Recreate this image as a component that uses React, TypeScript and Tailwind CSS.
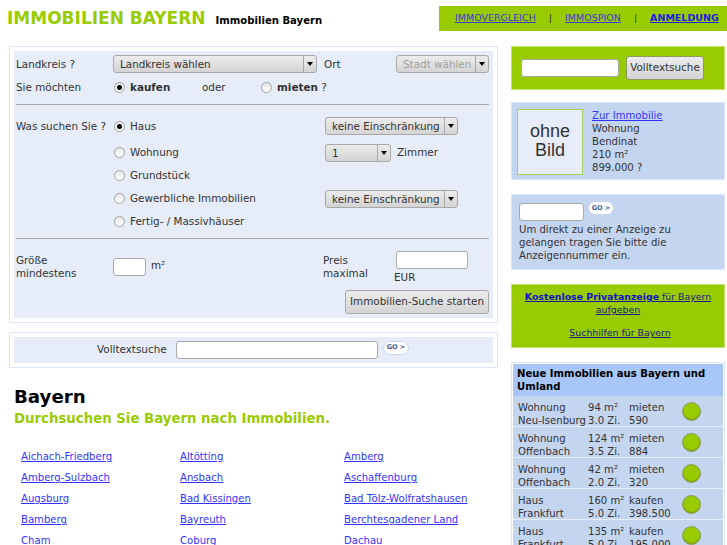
import type { ReactNode } from 'react';

const cities = [
  ['Aichach-Friedberg', 'Altötting', 'Amberg'],
  ['Amberg-Sulzbach', 'Ansbach', 'Aschaffenburg'],
  ['Augsburg', 'Bad Kissingen', 'Bad Tölz-Wolfratshausen'],
  ['Bamberg', 'Bayreuth', 'Berchtesgadener Land'],
  ['Cham', 'Coburg', 'Dachau'],
];

const listings = [
  ['Wohnung', 'Neu-Isenburg', '94 m²', '3.0 Zi.', 'mieten', '590'],
  ['Wohnung', 'Offenbach', '124 m²', '3.5 Zi.', 'mieten', '884'],
  ['Wohnung', 'Offenbach', '42 m²', '2.0 Zi.', 'mieten', '320'],
  ['Haus', 'Frankfurt', '160 m²', '5.0 Zi.', 'kaufen', '398.500'],
  ['Haus', 'Frankfurt', '135 m²', '5.0 Zi.', 'kaufen', '195.000'],
];

function Radio({ checked }: { checked?: boolean }) {
  return (
    <span className="flex h-[11px] w-[11px] shrink-0 items-center justify-center rounded-full border border-[#a0a0a0] bg-gradient-to-b from-[#e8e8e8] to-white">
      {checked && <span className="h-[5px] w-[5px] rounded-full bg-black" />}
    </span>
  );
}

function Select({ label, width, disabled }: { label: string; width: string; disabled?: boolean }) {
  return (
    <div className={`flex h-[18px] items-stretch rounded-[3px] border border-[#a8a8a8] bg-gradient-to-b from-[#ececec] to-[#d4d4d4] ${width}`}>
      <span className={`flex-1 pl-1.5 leading-[17px] whitespace-nowrap ${disabled ? 'text-[#a0a0a0]' : 'text-[#333]'}`}>{label}</span>
      <span className="flex w-[13px] items-center justify-center border-l border-[#a8a8a8]">
        <span className="h-0 w-0 border-x-[3px] border-t-[4px] border-x-transparent border-t-black" />
      </span>
    </div>
  );
}

function TextBox({ width, height = 'h-[18px]' }: { width: string; height?: string }) {
  return <div className={`rounded-[3px] border border-[#a8a8a8] bg-white ${width} ${height}`} />;
}

function GoButton() {
  return (
    <span className="flex h-[14px] w-[26px] items-center justify-center rounded-full border border-[#c8d4ec] bg-white text-[6.5px] font-bold whitespace-nowrap text-[#3a5a90]">
      GO &gt;
    </span>
  );
}

function Panel({ className, children }: { className: string; children: ReactNode }) {
  return <div className={`border border-[#dbe6fb] p-1 ${className}`}>{children}</div>;
}

function SearchOption({ checked, label, children }: { checked?: boolean; label: string; children?: ReactNode }) {
  return (
    <div className="flex h-[23px] items-center">
      <div className="ml-[98px] flex w-[211px] items-center gap-[5px]">
        <Radio checked={checked} />
        <span>{label}</span>
      </div>
      {children}
    </div>
  );
}

export default function App() {
  return (
    <div className="h-[545px] w-[727px] overflow-hidden bg-white font-['DejaVu_Sans',sans-serif] text-[10.1px] text-[#333]">
      <header className="flex h-[46px] items-start justify-between">
        <div className="ml-[7px] mt-[8px] flex items-baseline gap-[10px]">
          <span className="text-[17px] font-bold leading-[20px] text-[#99cc00]">IMMOBILIEN BAYERN</span>
          <span className="font-bold text-black">Immobilien Bayern</span>
        </div>
        <nav className="mt-[6px] flex h-[25px] w-[288px] items-center bg-[#99cc00] pl-[16px] text-[9.5px] text-[#3a3ad0]">
          <a className="underline" href="#">IMMOVERGLEICH</a>
          <span className="mx-[13px] text-[#333]">|</span>
          <a className="underline" href="#">IMMOSPION</a>
          <span className="mx-[13px] text-[#333]">|</span>
          <a className="font-bold text-[#2020e0] underline" href="#">ANMELDUNG</a>
        </nav>
      </header>

      <div className="flex items-start pl-[9px]">
        <main className="w-[489px]">
          <Panel className="h-[277px]">
            <div className="h-[267px] bg-[#e6edf9] pl-[2px] pr-[4px] text-[10.4px]">
              <div className="flex h-[22px] items-end">
                <span className="w-[97px]">Landkreis ?</span>
                <Select label="Landkreis wählen" width="w-[204px]" />
                <span className="ml-[7px] w-[72px]">Ort</span>
                <Select label="Stadt wählen" width="w-[93px]" disabled />
              </div>
              <div className="flex h-[27px] items-center pt-[2px]">
                <span className="w-[98px]">Sie möchten</span>
                <Radio checked />
                <span className="ml-[5px] w-[72px] font-bold">kaufen</span>
                <span className="w-[59px]">oder</span>
                <Radio />
                <span className="ml-[5px]"><b>mieten</b> ?</span>
              </div>
              <hr className="mt-[4px] border-t border-[#a8a8a8]" />
              <div className="mt-[12px] flex h-[18px] items-center">
                <span className="w-[98px] pt-[2px]">Was suchen Sie ?</span>
                <div className="flex w-[211px] items-center gap-[5px] pt-[2px]">
                  <Radio checked />
                  <span>Haus</span>
                </div>
                <Select label="keine Einschränkung" width="w-[133px]" />
              </div>
              <div className="mt-[6px]">
                <SearchOption label="Wohnung">
                  <Select label="1" width="w-[66px]" />
                  <span className="ml-[6px]">Zimmer</span>
                </SearchOption>
                <SearchOption label="Grundstück" />
                <SearchOption label="Gewerbliche Immobilien">
                  <Select label="keine Einschränkung" width="w-[133px]" />
                </SearchOption>
                <SearchOption label="Fertig- / Massivhäuser" />
              </div>
              <hr className="mt-[5px] border-t border-[#a8a8a8]" />
              <div className="mt-[12px] flex items-start">
                <span className="mt-[3px] w-[97px] leading-[13px]">Größe<br />mindestens</span>
                <div className="mt-[7px] flex w-[210px] items-start">
                  <TextBox width="w-[33px]" />
                  <span className="ml-[5px]">m²</span>
                </div>
                <span className="mt-[3px] w-[73px] leading-[13px]">Preis<br />maximal</span>
                <div>
                  <TextBox width="w-[72px]" />
                  <div className="mt-[1px] -ml-[2px]">EUR</div>
                </div>
              </div>
              <div className="mt-[4px] flex justify-end">
                <button className="h-[24px] w-[144px] rounded-[3px] border border-[#a8a8a8] bg-gradient-to-b from-[#ececec] to-[#d4d4d4] text-[#333]">
                  Immobilien-Suche starten
                </button>
              </div>
            </div>
          </Panel>

          <Panel className="mt-[9px] h-[36px]">
            <div className="flex h-[26px] items-center bg-[#e6edf9] text-[10.4px]">
              <span className="ml-[83px] w-[79px]">Volltextsuche</span>
              <TextBox width="w-[202px]" />
              <span className="-mt-[4px] ml-[5px]"><GoButton /></span>
            </div>
          </Panel>

          <h1 className="ml-[5px] mt-[17px] text-[18.2px] font-bold leading-[24px] text-black">Bayern</h1>
          <h2 className="ml-[5px] text-[13.3px] font-bold leading-[19px] text-[#99cc00]">Durchsuchen Sie Bayern nach Immobilien.</h2>

          <div className="ml-[12px] mt-[22px] grid grid-cols-[159px_164px_1fr] gap-y-[8px] leading-[13px]">
            {cities.flat().map((city) => (
              <a key={city} className="text-[#3333ff] underline" href="#">{city}</a>
            ))}
          </div>
        </main>

        <aside className="ml-[13px] w-[214px]">
          <div className="flex h-[44px] items-center border border-[#c4e070] bg-[#99cc00] pl-[9px]">
            <TextBox width="w-[98px]" />
            <button className="ml-[7px] h-[24px] w-[78px] rounded-[3px] border border-[#8a9a60] bg-gradient-to-b from-[#ececec] to-[#d4d4d4] text-[10.4px] text-[#333]">
              Volltextsuche
            </button>
          </div>

          <div className="mt-[12px] flex h-[78px] border border-[#dbe6fb] bg-[#c4d5f0] pl-[5px] pt-[6px]">
            <div className="flex h-[66px] w-[66px] shrink-0 items-center justify-center border border-[#a8d060] bg-[#e6edf9] pb-[2px] text-center font-['Liberation_Sans',sans-serif] text-[18px] leading-[19px]">
              ohne<br />Bild
            </div>
            <div className="ml-[9px] leading-[13px]">
              <a className="text-[#3333ff] underline" href="#">Zur Immobilie</a>
              <br />Wohnung<br />Bendinat<br />210 m²<br />899.000 ?
            </div>
          </div>

          <div className="mt-[14px] h-[76px] border border-[#dbe6fb] bg-[#c4d5f0] pl-[7px] pt-[8px] leading-[13px]">
            <div className="flex items-start">
              <TextBox width="w-[65px]" />
              <span className="-mt-[2px] ml-[4px]"><GoButton /></span>
            </div>
            <p className="mt-[2px]">Um direkt zu einer Anzeige zu<br />gelangen tragen Sie bitte die<br />Anzeigennummer ein.</p>
          </div>

          <div className="mt-[14px] h-[64px] border border-[#c4e070] bg-[#99cc00] pt-[5px] text-center text-[9.4px] leading-[13px]">
            <a className="text-[#1a1a80] underline" href="#">
              <b className="text-[#1010d0]">Kostenlose Privatanzeige</b> für Bayern<br />aufgeben
            </a>
            <span className="block h-[10px]" />
            <a className="ml-[4px] text-[#1a1a80] underline" href="#">Suchhilfen für Bayern</a>
          </div>

          <div className="mt-[14px] border border-[#dbe6fb] p-px">
            <div className="bg-[#a8c6f8] px-[4px] py-[3px] font-bold leading-[13px] text-black">
              Neue Immobilien aus Bayern und Umland
            </div>
            {listings.map((l, i) => (
              <div key={i} className="flex h-[31px] items-start border-b border-[#e6edf9] bg-[#c4d5f0] pl-[5px] pt-[5px] leading-[13px]">
                <div className="w-[70px] whitespace-nowrap">{l[0]}<br />{l[1]}</div>
                <div className="w-[41px] whitespace-nowrap">{l[2]}<br />{l[3]}</div>
                <div className="w-[53px] whitespace-nowrap">{l[4]}<br />{l[5]}</div>
                <span className="mt-[1px] h-[19px] w-[19px] rounded-full border border-[#8a9a60] bg-[#99cc00] shadow-[inset_0_-1px_1px_#7a9a00]" />
              </div>
            ))}
          </div>
        </aside>
      </div>
    </div>
  );
}
